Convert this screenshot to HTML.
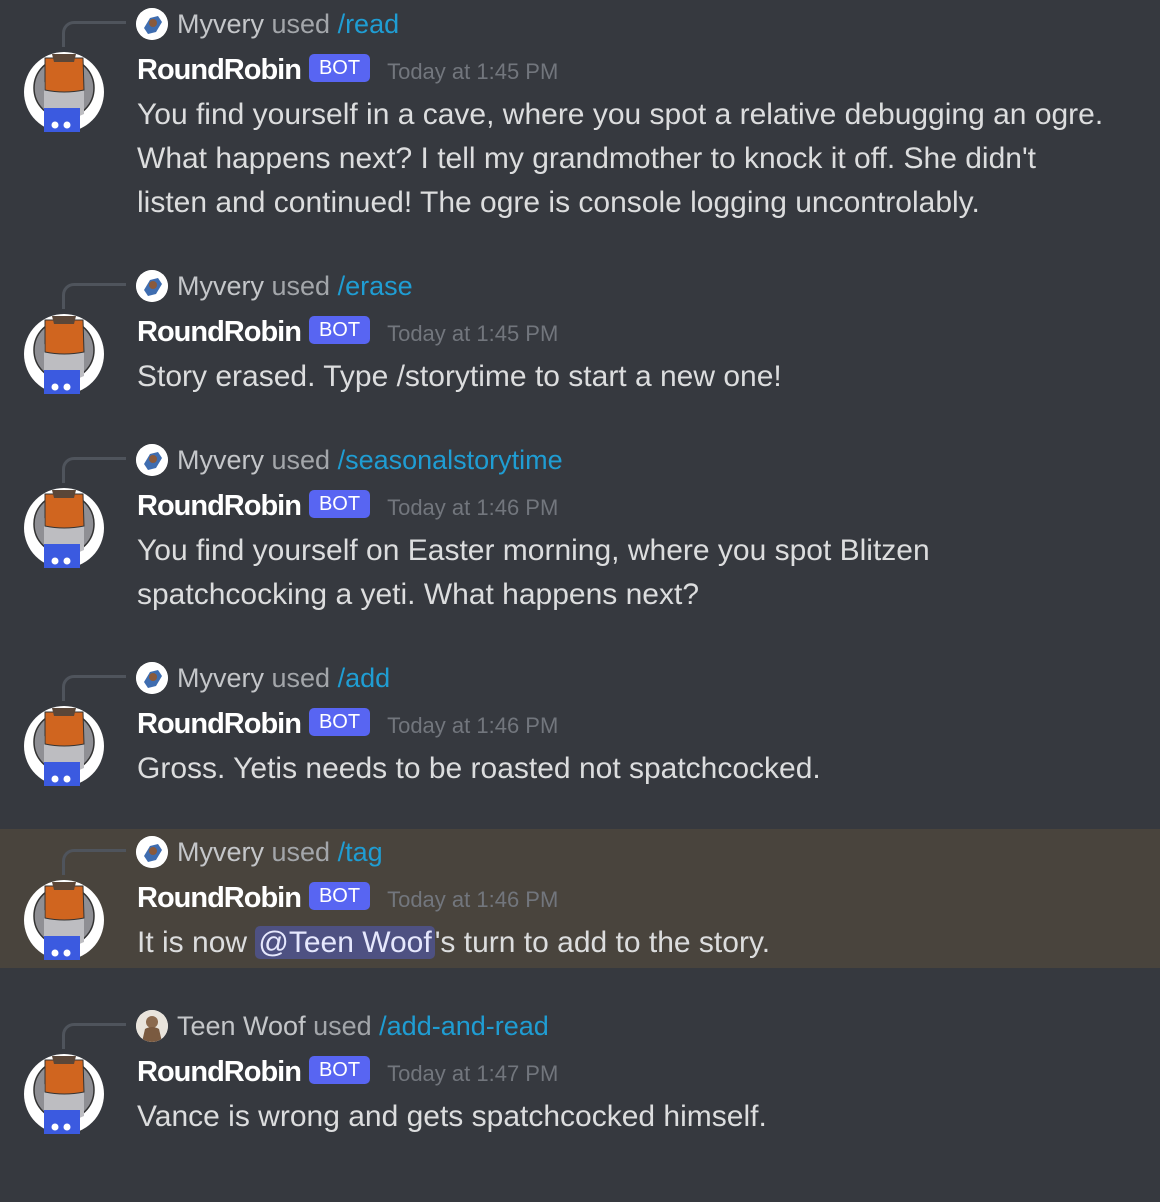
<!DOCTYPE html>
<html><head><meta charset="utf-8"><style>
body{margin:0;width:1160px;height:1182px;background:#36393f;overflow:hidden;font-family:"Liberation Sans",sans-serif;position:relative}
.g{position:absolute;left:0;width:1160px;height:200px}
.spine{position:absolute;left:62px;top:21px;width:64px;height:26px;border-left:3px solid #4f545c;border-top:3px solid #4f545c;border-top-left-radius:12px;box-sizing:border-box}
.ra{position:absolute;left:136px;top:8px;width:32px;height:32px;border-radius:50%;background:#fff;overflow:hidden}
.rl{position:absolute;left:177px;top:2px;height:44px;line-height:44px;font-size:27px;white-space:nowrap;color:#a3a6aa}
.rl b{color:#c4c6c9;font-weight:normal}
.rl i{font-style:normal;color:#1f9dd3}
.av{position:absolute;left:24px;top:52px;width:80px;height:80px}
.hd{position:absolute;left:137px;top:48px;height:44px;line-height:44px;white-space:nowrap}
.nm{font-size:29px;color:#fff;font-weight:bold;letter-spacing:-1px}
.bot{display:inline-block;vertical-align:5px;margin-left:8px;background:#5865f2;color:#fff;font-size:20px;line-height:28px;height:28px;padding:0 10px;border-radius:5px}
.ts{font-size:22px;color:#72767d;margin-left:17px}
.ct{position:absolute;left:137px;top:93px;white-space:nowrap;line-height:44px;font-size:30px;color:#dcddde}
.mn{background:#4e5182;color:#e6e8fd;border-radius:5px;padding:0 3px}
</style></head><body>
<svg width="0" height="0" style="position:absolute"><defs>
<g id="av"><circle cx="40" cy="40" r="40" fill="#fff"/><circle cx="40" cy="36" r="30" fill="#8f8f94" stroke="#333" stroke-width="1.5"/><path d="M20 30 Q40 45 60 30 L60 62 Q40 72 20 62Z" fill="#bdbdc1"/><path d="M21 6 L59 6 L60 38 Q40 42 21 38Z" fill="#d0651f" stroke="#333" stroke-width="1"/><path d="M28 2 L52 2 L50 10 L30 10Z" fill="#5a4638"/><rect x="20" y="56" width="36" height="24" fill="#3b5ae0"/><circle cx="31" cy="73" r="3.5" fill="#fff"/><circle cx="43" cy="73" r="3.5" fill="#fff"/></g>
<g id="sa"><circle cx="16" cy="16" r="16" fill="#fff"/><path d="M8 20 L14 10 L22 8 L26 14 L20 24 L12 26Z" fill="#3f6db0"/><circle cx="17" cy="15" r="4" fill="#8a5a3c"/></g>
<g id="tw"><circle cx="16" cy="16" r="16" fill="#e9e4dc"/><circle cx="16" cy="12" r="6" fill="#8b6a4e"/><path d="M6 32 L9 19 Q16 15 23 19 L26 32Z" fill="#7a5a40"/></g>
</defs></svg>

<div class="g" style="top:0"><div class="spine"></div><svg class="ra" viewBox="0 0 32 32"><use href="#sa"/></svg><div class="rl"><b>Myvery</b> used <i>/read</i></div><svg class="av" viewBox="0 0 80 80"><use href="#av"/></svg><div class="hd"><span class="nm">RoundRobin</span><span class="bot">BOT</span><span class="ts">Today at 1:45 PM</span></div><div class="ct">You find yourself in a cave, where you spot a relative debugging an ogre.<br>What happens next? I tell my grandmother to knock it off. She didn't<br>listen and continued! The ogre is console logging uncontrolably.</div></div>

<div class="g" style="top:262px"><div class="spine"></div><svg class="ra" viewBox="0 0 32 32"><use href="#sa"/></svg><div class="rl"><b>Myvery</b> used <i>/erase</i></div><svg class="av" viewBox="0 0 80 80"><use href="#av"/></svg><div class="hd"><span class="nm">RoundRobin</span><span class="bot">BOT</span><span class="ts">Today at 1:45 PM</span></div><div class="ct">Story erased. Type /storytime to start a new one!</div></div>

<div class="g" style="top:436px"><div class="spine"></div><svg class="ra" viewBox="0 0 32 32"><use href="#sa"/></svg><div class="rl"><b>Myvery</b> used <i>/seasonalstorytime</i></div><svg class="av" viewBox="0 0 80 80"><use href="#av"/></svg><div class="hd"><span class="nm">RoundRobin</span><span class="bot">BOT</span><span class="ts">Today at 1:46 PM</span></div><div class="ct">You find yourself on Easter morning, where you spot Blitzen<br>spatchcocking a yeti. What happens next?</div></div>

<div class="g" style="top:654px"><div class="spine"></div><svg class="ra" viewBox="0 0 32 32"><use href="#sa"/></svg><div class="rl"><b>Myvery</b> used <i>/add</i></div><svg class="av" viewBox="0 0 80 80"><use href="#av"/></svg><div class="hd"><span class="nm">RoundRobin</span><span class="bot">BOT</span><span class="ts">Today at 1:46 PM</span></div><div class="ct">Gross. Yetis needs to be roasted not spatchcocked.</div></div>

<div style="position:absolute;left:0;top:829px;width:1160px;height:139px;background:#49443d"></div>
<div class="g" style="top:828px"><div class="spine"></div><svg class="ra" viewBox="0 0 32 32"><use href="#sa"/></svg><div class="rl"><b>Myvery</b> used <i>/tag</i></div><svg class="av" viewBox="0 0 80 80"><use href="#av"/></svg><div class="hd"><span class="nm">RoundRobin</span><span class="bot">BOT</span><span class="ts">Today at 1:46 PM</span></div><div class="ct">It is now <span class="mn">@Teen Woof</span>'s turn to add to the story.</div></div>

<div class="g" style="top:1002px"><div class="spine"></div><svg class="ra" viewBox="0 0 32 32"><use href="#tw"/></svg><div class="rl"><b>Teen Woof</b> used <i>/add-and-read</i></div><svg class="av" viewBox="0 0 80 80"><use href="#av"/></svg><div class="hd"><span class="nm">RoundRobin</span><span class="bot">BOT</span><span class="ts">Today at 1:47 PM</span></div><div class="ct">Vance is wrong and gets spatchcocked himself.</div></div>
</body></html>
